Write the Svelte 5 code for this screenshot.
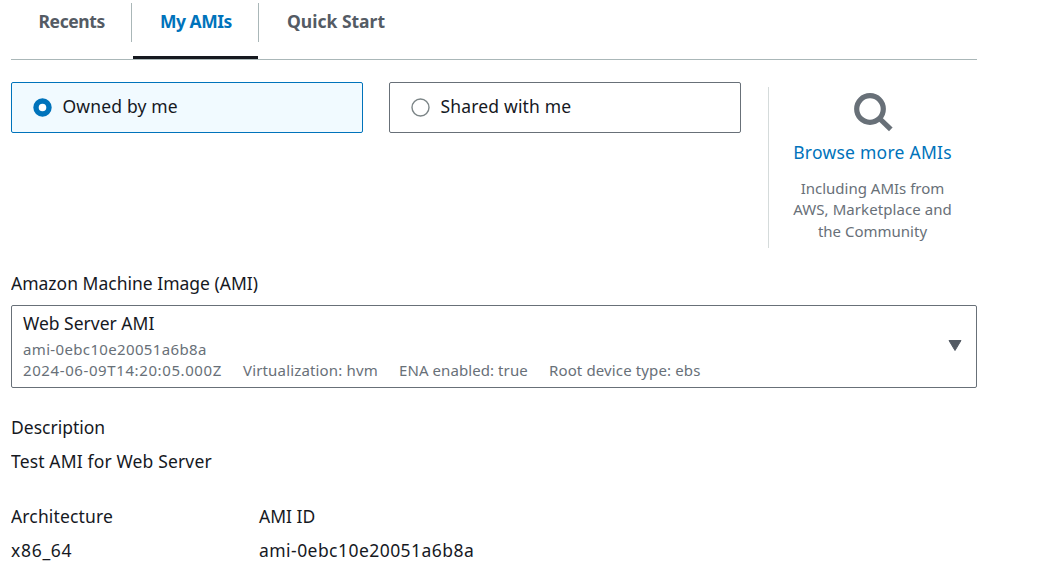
<script>
  const tabs = [
    { label: 'Recents', cls: 'recents' },
    { label: 'My AMIs', cls: 'mine', active: true },
    { label: 'Quick Start', cls: 'quick' }
  ];
  let owner = $state('me');
</script>

<main>
  <nav>
    {#each tabs as tab}
      <button class="tab {tab.cls}" class:active={tab.active}><span>{tab.label}</span></button>
    {/each}
  </nav>

  <section class="sources">
    <button class="tile" class:selected={owner === 'me'} onclick={() => (owner = 'me')}>
      <svg class="radio" width="19" height="19" viewBox="0 0 19 19">
        {#if owner === 'me'}<circle cx="9.5" cy="9.5" r="6.5" fill="#fff" stroke="#0073bb" stroke-width="5.4" />{:else}<circle cx="9.5" cy="9.5" r="8.5" fill="#fff" stroke="#7c8587" stroke-width="1.4" />{/if}
      </svg><span>Owned by me</span>
    </button>
    <button class="tile" class:selected={owner === 'shared'} onclick={() => (owner = 'shared')}>
      <svg class="radio" width="19" height="19" viewBox="0 0 19 19">
        {#if owner === 'shared'}<circle cx="9.5" cy="9.5" r="6.5" fill="#fff" stroke="#0073bb" stroke-width="5.4" />{:else}<circle cx="9.5" cy="9.5" r="8.5" fill="#fff" stroke="#7c8587" stroke-width="1.4" />{/if}
      </svg><span>Shared with me</span>
    </button>
    <aside>
      <svg width="40" height="40" viewBox="0 0 40 40" fill="none" stroke="#687078">
        <circle cx="17" cy="17" r="13.3" stroke-width="5.2" />
        <path d="M26 26L37.8 37.4" stroke-width="5.2" />
      </svg>
      <span class="browse">Browse more AMIs</span>
      <p><span>Including AMIs from</span><span class="market">AWS, Marketplace and</span><span>the Community</span></p>
    </aside>
  </section>

  <div class="label">Amazon Machine Image (AMI)</div>
  <button class="select">
    <span class="text">
      <span class="name">Web Server AMI</span>
      <span class="id">ami-0ebc10e20051a6b8a</span>
      <span class="meta">
        <span class="date">2024-06-09T14:20:05.000Z</span>
        <span class="virt">Virtualization: hvm</span>
        <span class="ena">ENA enabled: true</span>
        <span class="root">Root device type: ebs</span>
      </span>
    </span>
    <svg width="14" height="11" viewBox="0 0 14 11"><path d="M1 .5H13L7 10.5Z" fill="#545b64" stroke="#545b64" stroke-linejoin="round" /></svg>
  </button>

  <dl class="description">
    <dt>Description</dt>
    <dd class="summary">Test AMI for Web Server</dd>
  </dl>
  <div class="details">
    <dl>
      <dt class="arch">Architecture</dt>
      <dd class="cpu">x86_64</dd>
    </dl>
    <dl>
      <dt>AMI ID</dt>
      <dd class="ami">ami-0ebc10e20051a6b8a</dd>
    </dl>
  </div>
</main>

<style>
  :global(body) { background: #fff; overflow: hidden; }
  main {
    width: 966px;
    height: 570px;
    box-sizing: border-box;
    margin-left: 11px;
    overflow: hidden;
    font: 17.5px/24px "Noto Sans", sans-serif;
    color: #16191f;
    white-space: nowrap;
  }
  button { font: inherit; color: inherit; margin: 0; padding: 0; border: 0; background: none; text-align: left; white-space: nowrap; }
  nav { display: flex; height: 60px; box-sizing: border-box; border-bottom: 1px solid #aab7b8; }
  .tab { height: 59px; display: flex; padding-top: 3px; box-sizing: border-box; font-weight: 700; color: #545b64; }
  .tab span { height: 39px; line-height: 36px; box-sizing: border-box; }
  .recents { width: 120px; letter-spacing: -.4px; }
  .recents span { width: 121px; flex: none; padding-left: 27.5px; border-right: 1px solid #aab7b8; }
  .mine { width: 128px; padding-left: 2px; letter-spacing: -.5px; }
  .mine span { width: 126px; padding-left: 27px; border-right: 1px solid #aab7b8; }
  .quick { padding-left: 28px; }
  .tab.active { color: #0073bb; background: linear-gradient(#16191f, #16191f) 2px 100% / 125px 3px no-repeat; }
  .sources { display: flex; align-items: flex-start; padding-top: 22px; height: 166px; }
  .tile {
    width: 352px; height: 51px; box-sizing: border-box; margin-right: 26px; padding: 0 0 4px 20.5px;
    border: 1px solid #687078; border-radius: 2px; display: flex; align-items: center; letter-spacing: .17px;
  }
  .tile.selected { border-color: #0073bb; background: #f1faff; }
  .radio { display: block; flex: none; margin: 4px 11px 0 0; }
  aside {
    width: 208px; height: 161px; box-sizing: border-box; margin-top: 5px; margin-left: 1px;
    border-left: 1px solid #d5dbdb; display: flex; flex-direction: column; align-items: center; padding-top: 5px;
  }
  aside svg { display: block; }
  .browse { color: #0073bb; margin-top: 8px; letter-spacing: .25px; }
  aside p { margin: 14px 0 0; font-size: 15px; line-height: 21.3px; color: #687078; display: flex; flex-direction: column; align-items: center; }
  .market { letter-spacing: .07px; }
  .label { padding-top: 23px; height: 34px; }
  .select {
    width: 966px; height: 83px; box-sizing: border-box; border: 1px solid #687078; border-radius: 2px;
    padding: 5px 14.5px 0 11px; display: flex; justify-content: space-between;
  }
  .select svg { margin-top: 29px; }
  .text { display: flex; flex-direction: column; }
  .id, .meta { font-size: 15px; line-height: 21px; color: #687078; }
  .id { margin-top: 4px; letter-spacing: .35px; }
  .meta { display: flex; }
  .date { width: 220px; letter-spacing: .6px; }
  .virt { width: 156px; letter-spacing: .16px; }
  .ena { width: 150px; letter-spacing: .08px; }
  .root { letter-spacing: .13px; }
  dl, dd { margin: 0; }
  .description { margin-top: 27px; }
  dd { margin-top: 10px; }
  .summary, .arch { letter-spacing: .15px; }
  .cpu { letter-spacing: .7px; }
  .ami { letter-spacing: .45px; }
  .details { margin-top: 31px; display: grid; grid-template-columns: 248px 1fr; }
</style>
